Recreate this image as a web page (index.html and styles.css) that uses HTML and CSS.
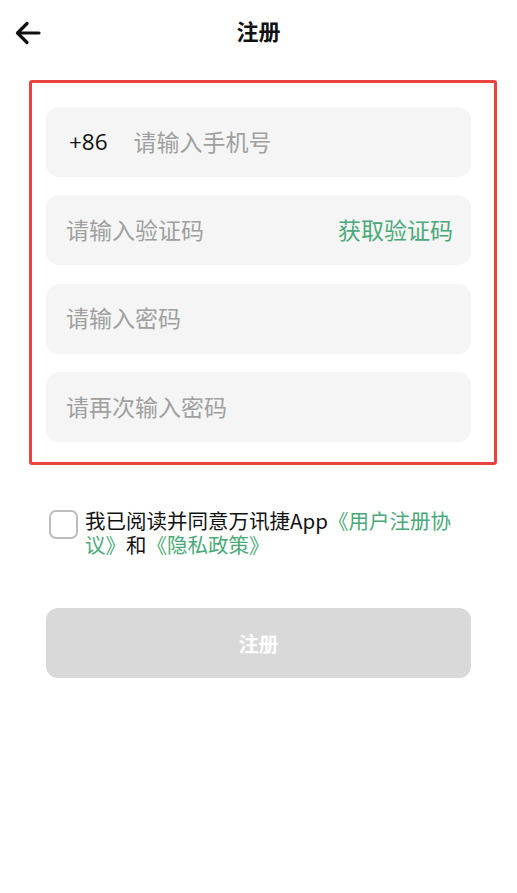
FILE: index.html
```html
<!DOCTYPE html>
<html lang="zh">
<head>
<meta charset="utf-8">
<link rel="stylesheet" href="styles.css">
</head>
<body>
<div class="page">
  <header class="topbar">
    <span class="back">
      <svg width="26" height="24" viewBox="0 0 26 24"><path d="M24 12H3M12 2.5L2.5 12L12 21.5" fill="none" stroke="#111" stroke-width="3.2" stroke-linecap="round" stroke-linejoin="round"/></svg>
    </span>
    <h1 class="title">注册</h1>
  </header>
  <section class="form-box">
    <div class="field"><span class="prefix">+86</span><span class="ph">请输入手机号</span></div>
    <div class="field"><span class="ph">请输入验证码</span><span class="get-code">获取验证码</span></div>
    <div class="field"><span class="ph">请输入密码</span></div>
    <div class="field"><span class="ph">请再次输入密码</span></div>
  </section>
  <div class="agree">
    <span class="checkbox"></span>
    <p class="agree-text">我已阅读并同意万讯捷App<span class="link">《用户注册协议》</span>和<span class="link">《隐私政策》</span></p>
  </div>
  <button class="submit">注册</button>
</div>
</body>
</html>
```
FILE: styles.css
```css
* { box-sizing: border-box; }
html, body { margin: 0; padding: 0; background: #fff; }
body { font-family: "Noto Sans CJK SC", "Noto Sans", sans-serif; color: #111; }
.page { width: 517px; }
.topbar { position: relative; height: 60px; display: flex; align-items: center; justify-content: center; }
.back { position: absolute; left: 15px; top: 21px; display: flex; }
.title { margin: 0; font-size: 22px; font-weight: 700; line-height: 1; }
.form-box {
  margin: 20px 20px 0 29px;
  border: 3px solid #e9423f;
  border-radius: 3px;
  padding: 24px 23px 20px 14px;
  display: flex; flex-direction: column; gap: 18.4px;
}
.field {
  height: 70px; border-radius: 13px; background: #f5f5f5;
  display: flex; align-items: center; padding: 0 18px 0 20px;
  font-size: 23px; line-height: 1;
}
.field .ph, .field .get-code { position: relative; top: -1px; }
.prefix { color: #111; font-family: "Open Sans", "Noto Sans", sans-serif; font-size: 22.5px; margin: 0 26px 0 3px; }
.ph { color: #a0a0a0; }
.get-code { margin-left: auto; color: #4aa978; }
.agree { display: flex; align-items: flex-start; margin: 43px 46px 0 49px; }
.checkbox { flex: none; width: 29px; height: 29px; border: 2px solid #bdbdbd; border-radius: 7px; margin-top: 2px; margin-right: 7px; }
.agree-text { margin: 0; font-size: 20.5px; line-height: 24px; color: #111; word-break: break-all; line-break: anywhere; }
.link { color: #4aa978; }
.submit {
  display: block; margin: 52px 0 0 46px; width: 425px; height: 70px;
  border: none; border-radius: 12px; background: #d9d9d9; color: #fff;
  font-family: "Noto Sans CJK SC", sans-serif; font-size: 20px; font-weight: 700;
}
```
